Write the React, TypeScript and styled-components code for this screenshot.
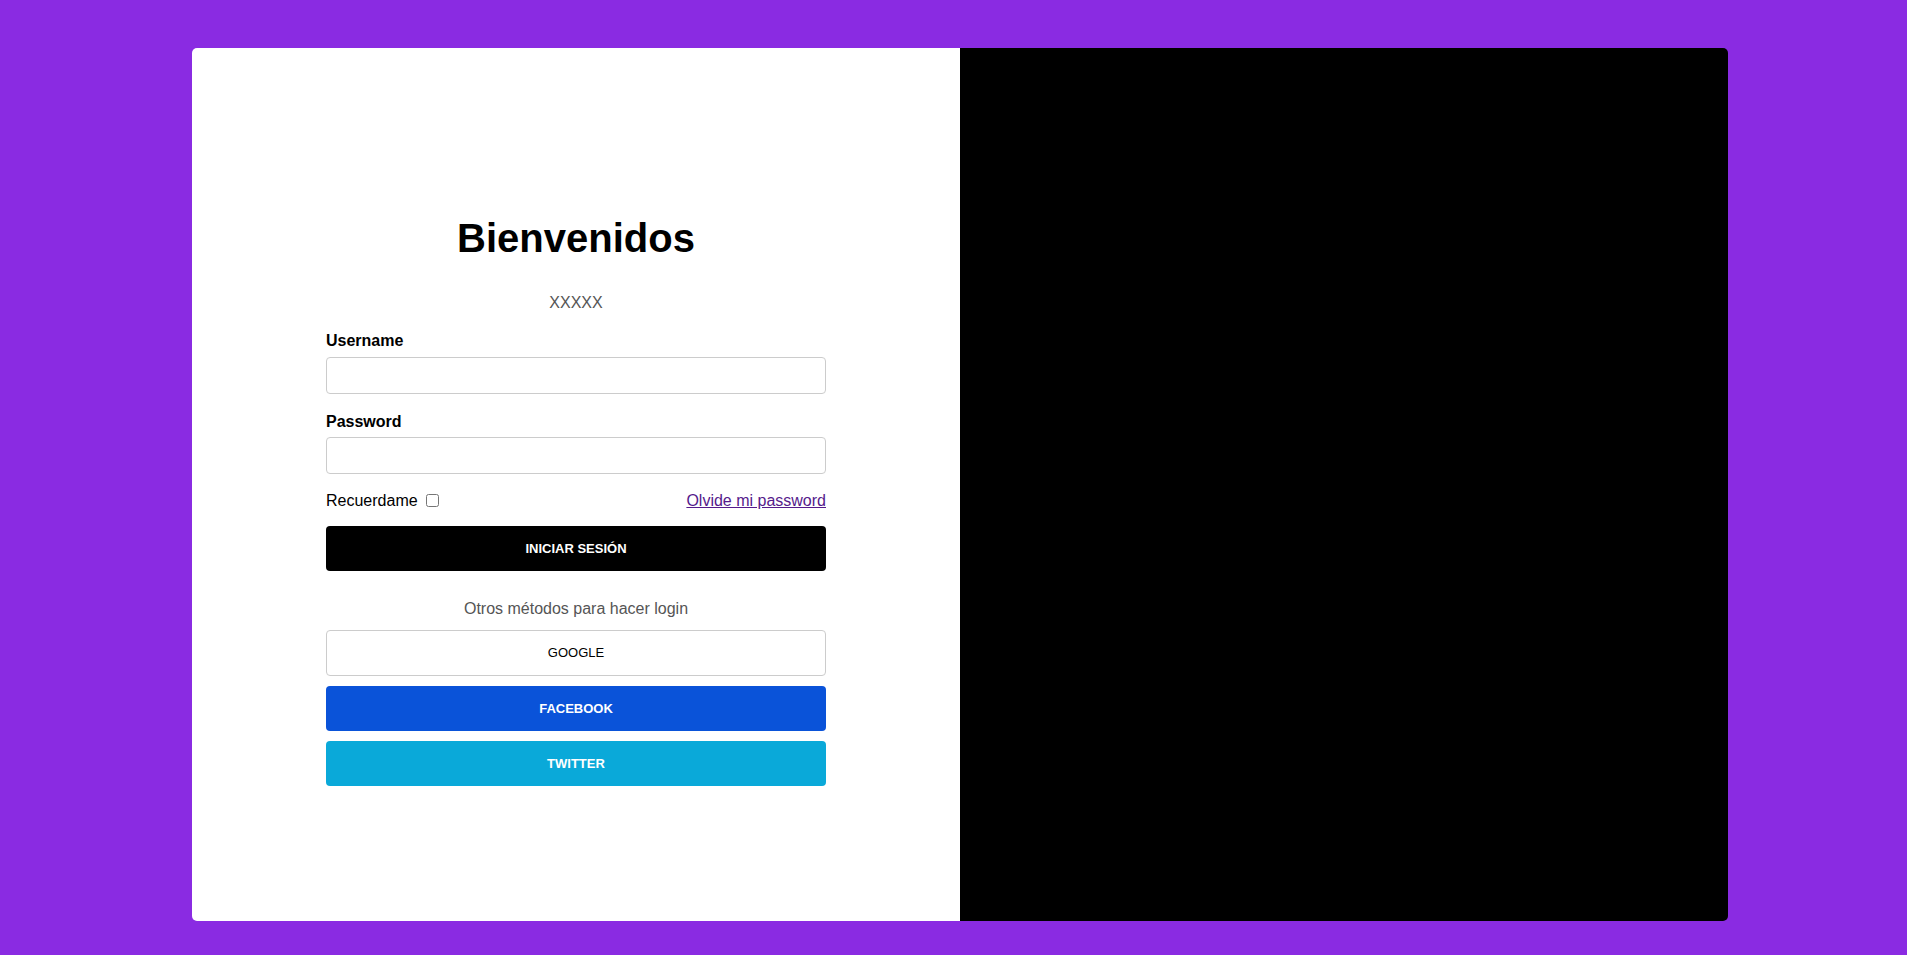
import React from "react";
import styled, { createGlobalStyle } from "styled-components";

const GlobalStyle = createGlobalStyle`
  html, body {
    margin: 0;
    padding: 0;
    background: #8a2be2;
    font-family: "Liberation Sans", Arial, sans-serif;
  }
  * { box-sizing: border-box; }
`;

const Page = styled.div`
  padding: 48px 0 0 192px;
`;

const Card = styled.div`
  display: grid;
  grid-template-columns: 768px 768px;
  height: 873px;
  width: 1536px;
  border-radius: 5px;
  overflow: hidden;
`;

const FormPanel = styled.section`
  background: #ffffff;
  display: flex;
  flex-direction: column;
  align-items: center;
  padding-top: 166.5px;
`;

const ImagePanel = styled.section`
  background: #000000;
`;

const Title = styled.h1`
  margin: 0;
  font-size: 40px;
  font-weight: bold;
  line-height: 46px;
  color: #000;
`;

const Subtitle = styled.p`
  margin: 33px 0 0;
  font-size: 16px;
  line-height: 18px;
  color: #555;
`;

const Form = styled.form`
  width: 500px;
  display: flex;
  flex-direction: column;
`;

const Label = styled.label<{ $gap: number }>`
  display: block;
  margin-top: ${(p) => p.$gap}px;
  font-size: 16px;
  font-weight: bold;
  line-height: 18px;
  color: #000;
`;

const Input = styled.input<{ $gap: number }>`
  margin-top: ${(p) => p.$gap}px;
  height: 37px;
  width: 100%;
  border: 1px solid #ccc;
  border-radius: 4px;
  font-family: inherit;
  font-size: 16px;
  padding: 0 10px;
  outline: none;
`;

const OptionsRow = styled.div`
  margin-top: 17px;
  display: flex;
  justify-content: space-between;
  align-items: baseline;
  font-size: 16px;
  line-height: 18px;
`;

const Remember = styled.label`
  color: #000;
  display: inline;
  white-space: pre;
`;

const Check = styled.input`
  margin: 3px 3px 3px 4px;
  width: 13px;
  height: 13px;
  vertical-align: -1px;
`;

const ForgotLink = styled.a`
  color: #551a8b;
  text-decoration: underline;
`;

const Button = styled.button<{ $bg: string; $fg: string; $border?: string; $gap: number; $h?: number; $weight?: number }>`
  margin-top: ${(p) => p.$gap}px;
  height: ${(p) => p.$h ?? 45}px;
  width: 100%;
  background: ${(p) => p.$bg};
  color: ${(p) => p.$fg};
  border: ${(p) => (p.$border ? `1px solid ${p.$border}` : "none")};
  border-radius: 4px;
  font-family: "Liberation Sans", Arial, sans-serif;
  font-size: 13px;
  font-weight: ${(p) => p.$weight ?? 700};
  cursor: pointer;
`;

const Divider = styled.p`
  margin: 29px 0 0;
  text-align: center;
  font-size: 16px;
  line-height: 18px;
  color: #555;
`;

export default function App() {
  return (
    <>
      <GlobalStyle />
      <Page>
        <Card>
          <FormPanel>
            <Title>Bienvenidos</Title>
            <Subtitle>XXXXX</Subtitle>
            <Form onSubmit={(e) => e.preventDefault()}>
              <Label $gap={20} htmlFor="username">Username</Label>
              <Input $gap={7} id="username" type="text" />
              <Label $gap={19} htmlFor="password">Password</Label>
              <Input $gap={6} id="password" type="password" />
              <OptionsRow>
                <Remember>
                  {"Recuerdame "}
                  <Check type="checkbox" />
                </Remember>
                <ForgotLink href="#">Olvide mi password</ForgotLink>
              </OptionsRow>
              <Button $gap={16} $bg="#000000" $fg="#ffffff" type="submit">
                INICIAR SESIÓN
              </Button>
              <Divider>Otros métodos para hacer login</Divider>
              <Button $gap={12} $h={46} $bg="#ffffff" $fg="#000000" $border="#cccccc" $weight={500} type="button">
                GOOGLE
              </Button>
              <Button $gap={10} $bg="#0a53d9" $fg="#ffffff" type="button">
                FACEBOOK
              </Button>
              <Button $gap={10} $bg="#0aa9d9" $fg="#ffffff" type="button">
                TWITTER
              </Button>
            </Form>
          </FormPanel>
          <ImagePanel />
        </Card>
      </Page>
    </>
  );
}
